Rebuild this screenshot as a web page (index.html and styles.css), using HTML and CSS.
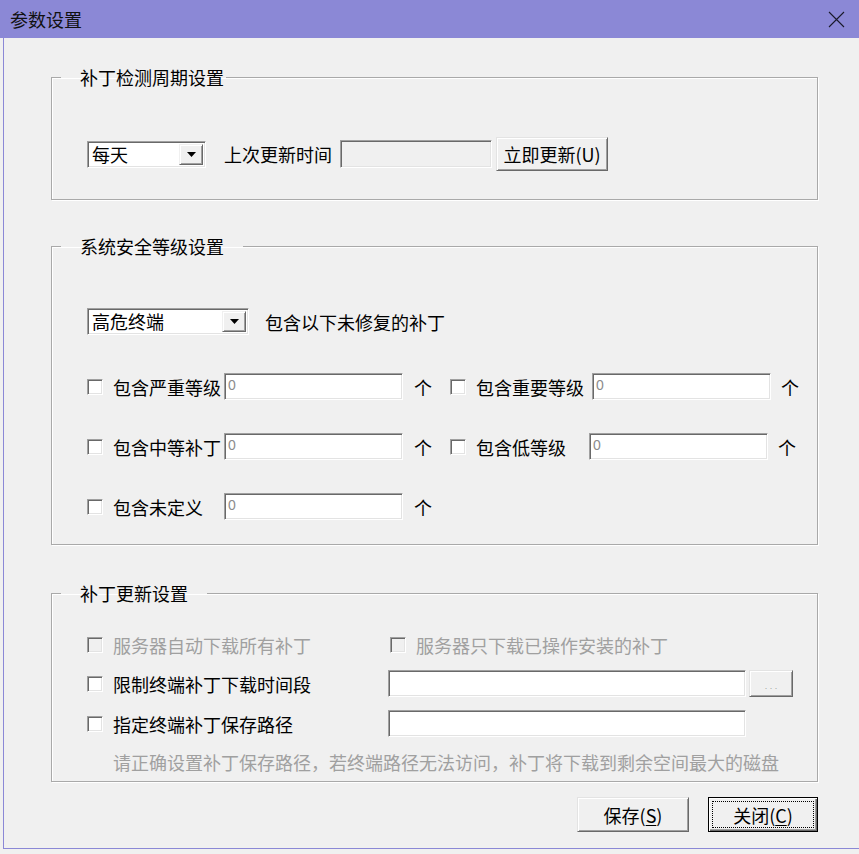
FILE: index.html
```html
<!DOCTYPE html>
<html lang="zh-CN">
<head>
<meta charset="utf-8">
<title>参数设置</title>
<link rel="stylesheet" href="styles.css">
</head>
<body>
<div class="window">
  <div class="titlebar">
    <span class="title">参数设置</span>
    <svg class="close" width="17" height="17" viewBox="0 0 17 17"><path d="M1 1 L16 16 M16 1 L1 16" stroke="#1a1a2a" stroke-width="1.1" fill="none"/></svg>
  </div>
  <div class="client">
    <fieldset class="group g1">
      <legend>补丁检测周期设置</legend>
      <div class="inner inner-1">
        <div class="row row-update">
          <div class="combo combo-day"><span class="combo-text">每天</span><span class="combo-btn"><svg width="9" height="5" viewBox="0 0 9 5"><path d="M0 0 H9 L4.5 5 Z" fill="#000"/></svg></span></div>
          <span class="lbl lbl-last">上次更新时间</span>
          <div class="edit edit-disabled edit-time"></div>
          <button class="btn btn-update">立即更新(U)</button>
        </div>
      </div>
    </fieldset>

    <fieldset class="group g2">
      <legend>系统安全等级设置</legend>
      <div class="inner inner-2">
        <div class="row row-combo">
          <div class="combo combo-level"><span class="combo-text">高危终端</span><span class="combo-btn"><svg width="9" height="5" viewBox="0 0 9 5"><path d="M0 0 H9 L4.5 5 Z" fill="#000"/></svg></span></div>
          <span class="lbl lbl-include">包含以下未修复的补丁</span>
        </div>
        <div class="row row-num">
          <label class="opt opt-l"><span class="chk"></span><span class="lbl">包含严重等级</span></label>
          <div class="edit num"><span class="val">0</span></div>
          <span class="unit">个</span>
          <label class="opt opt-r1"><span class="chk"></span><span class="lbl">包含重要等级</span></label>
          <div class="edit num"><span class="val">0</span></div>
          <span class="unit unit-r">个</span>
        </div>
        <div class="row row-num">
          <label class="opt opt-l"><span class="chk"></span><span class="lbl">包含中等补丁</span></label>
          <div class="edit num"><span class="val">0</span></div>
          <span class="unit">个</span>
          <label class="opt opt-r2"><span class="chk"></span><span class="lbl">包含低等级</span></label>
          <div class="edit num"><span class="val">0</span></div>
          <span class="unit unit-r2">个</span>
        </div>
        <div class="row row-num">
          <label class="opt opt-l"><span class="chk"></span><span class="lbl">包含未定义</span></label>
          <div class="edit num"><span class="val">0</span></div>
          <span class="unit">个</span>
        </div>
      </div>
    </fieldset>

    <fieldset class="group g3">
      <legend>补丁更新设置</legend>
      <div class="inner inner-3">
        <div class="row row-a">
          <label class="opt opt-srv disabled"><span class="chk chk-disabled"></span><span class="lbl">服务器自动下载所有补丁</span></label>
          <label class="opt disabled"><span class="chk chk-disabled"></span><span class="lbl">服务器只下载已操作安装的补丁</span></label>
        </div>
        <div class="row row-b">
          <label class="opt opt-path"><span class="chk"></span><span class="lbl">限制终端补丁下载时间段</span></label>
          <div class="edit edit-path"></div>
          <button class="btn btn-dots">. . .</button>
        </div>
        <div class="row row-b">
          <label class="opt opt-path"><span class="chk"></span><span class="lbl">指定终端补丁保存路径</span></label>
          <div class="edit edit-path"></div>
        </div>
        <p class="hint">请正确设置补丁保存路径，若终端路径无法访问，补丁将下载到剩余空间最大的磁盘</p>
      </div>
    </fieldset>

    <div class="actions">
      <button class="btn btn-action">保存(<u>S</u>)</button>
      <button class="btn btn-action btn-default"><span class="focus">关闭(<u>C</u>)</span></button>
    </div>
  </div>
</div>
</body>
</html>
```

FILE: styles.css
```css
html, body {
  margin: 0;
  padding: 0;
  background: #f0f0f0;
}
body {
  font-family: "Noto Sans CJK SC", "Noto Sans", sans-serif;
  font-size: 18px;
  color: #000;
  width: 859px;
  height: 854px;
  overflow: hidden;
}
.window {
  width: 859px;
}
.titlebar {
  height: 38px;
  background: #8b88d6;
  display: flex;
  align-items: center;
  justify-content: space-between;
  padding: 0 14px 0 10px;
  box-sizing: border-box;
}
.title {
  font-size: 18px;
  line-height: 20px;
  color: #111;
}
.close {
  display: block;
  margin-top: 1px;
}
.client {
  margin-left: 3px;
  height: 811px;
  border-left: 1px solid #8b88d6;
  border-bottom: 1px solid #8b88d6;
  box-sizing: border-box;
  padding: 29px 0 0 47px;
  background: #f0f0f0;
}
.group {
  margin: 0;
  padding: 0;
  width: 767px;
  box-sizing: border-box;
  border: 1px solid #a9a9a9;
  box-shadow: inset 1px 1px 0 #fff, 1px 1px 0 #fff;
  min-width: 0;
}
.group legend {
  margin-left: 9px;
  padding: 0 19px 0 19px;
  line-height: 20px;
  font-size: 18px;
}
.g1 legend {
  padding-right: 2px;
}
.g2 {
  margin-top: 36px;
}
.g3 {
  margin-top: 38px;
}
.inner {
  padding-left: 35px;
}
.inner-1 {
  padding-top: 50px;
  padding-bottom: 28px;
}
.inner-2 {
  padding-top: 52px;
  padding-bottom: 24px;
}
.inner-3 {
  padding-top: 30px;
  padding-bottom: 7px;
}
.row {
  display: flex;
  align-items: center;
}
.row-update {
  height: 34px;
}
.row-combo {
  height: 27px;
}
.row-num {
  height: 27px;
  margin-top: 33px;
}
.row-combo + .row-num {
  margin-top: 38px;
}
.row-a {
  height: 24px;
}
.row-b {
  height: 27px;
  margin-top: 13px;
}
.lbl {
  white-space: nowrap;
  line-height: 20px;
}
.disabled .lbl {
  color: #a0a0a0;
}

/* sunken edit */
.edit {
  height: 27px;
  box-sizing: border-box;
  background: #fff;
  border-top: 1px solid #a0a0a0;
  border-left: 1px solid #a0a0a0;
  border-right: 1px solid #fff;
  border-bottom: 1px solid #fff;
  box-shadow: inset 1px 1px 0 #696969, inset -1px -1px 0 #e3e3e3;
  display: flex;
  align-items: center;
  flex: none;
}
.edit-disabled {
  background: #f0f0f0;
}
.edit-time {
  width: 152px;
  height: 28px;
  margin-left: 8px;
}
.val {
  font-family: "Liberation Sans", sans-serif;
  font-size: 14px;
  color: #8c8c8c;
  padding-left: 3px;
  margin-top: -3px;
}
.num {
  width: 179px;
}

/* combo */
.combo {
  height: 27px;
  box-sizing: border-box;
  background: #fff;
  border-top: 1px solid #a0a0a0;
  border-left: 1px solid #a0a0a0;
  border-right: 1px solid #fff;
  border-bottom: 1px solid #fff;
  box-shadow: inset 1px 1px 0 #696969, inset -1px -1px 0 #e3e3e3;
  display: flex;
  align-items: stretch;
  justify-content: space-between;
  padding: 2px;
  flex: none;
}
.combo-day {
  width: 119px;
}
.combo-level {
  width: 162px;
}
.combo-text {
  line-height: 21px;
  padding-left: 2px;
  white-space: nowrap;
}
.combo-btn {
  width: 24px;
  box-sizing: border-box;
  background: #f0f0f0;
  border-top: 1px solid #f0f0f0;
  border-left: 1px solid #f0f0f0;
  border-right: 1px solid #696969;
  border-bottom: 1px solid #696969;
  box-shadow: inset 1px 1px 0 #fff, inset -1px -1px 0 #a0a0a0;
  display: flex;
  align-items: center;
  justify-content: center;
}
.combo-btn svg {
  display: block;
}
.lbl-last {
  margin-left: 18px;
}
.lbl-include {
  margin-left: 16px;
}

/* checkbox options */
.opt {
  display: flex;
  align-items: center;
  flex: none;
}
.chk {
  width: 16px;
  height: 16px;
  box-sizing: border-box;
  background: #fff;
  border-top: 1px solid #a0a0a0;
  border-left: 1px solid #a0a0a0;
  border-right: 1px solid #fff;
  border-bottom: 1px solid #fff;
  box-shadow: inset 1px 1px 0 #696969, inset -1px -1px 0 #e3e3e3;
  margin-right: 10px;
  flex: none;
}
.chk-disabled {
  background: #f0f0f0;
}
.opt-l {
  width: 137px;
}
.opt-r1 {
  width: 142px;
}
.opt-r2 {
  width: 139px;
}
.unit {
  margin-left: 11px;
  width: 36px;
  line-height: 20px;
  flex: none;
}
.unit-r, .unit-r2 {
  margin-left: 10px;
}
.opt-srv {
  width: 303px;
}
.opt-path {
  width: 301px;
}
.edit-path {
  width: 358px;
}
.hint {
  margin: 13px 0 0 26px;
  line-height: 24px;
  color: #a0a0a0;
  white-space: nowrap;
}

/* raised buttons */
.btn {
  font-family: "Noto Sans CJK SC", "Noto Sans", sans-serif;
  font-size: 18px;
  color: #000;
  background: #f0f0f0;
  box-sizing: border-box;
  border-top: 1px solid #e3e3e3;
  border-left: 1px solid #e3e3e3;
  border-right: 1px solid #696969;
  border-bottom: 1px solid #696969;
  box-shadow: inset 1px 1px 0 #fff, inset -1px -1px 0 #a0a0a0;
  padding: 0;
  margin: 0;
  line-height: 20px;
  display: flex;
  align-items: center;
  justify-content: center;
  flex: none;
}
.btn-update {
  width: 112px;
  height: 34px;
  margin-left: 4px;
}
.btn-dots {
  width: 44px;
  height: 27px;
  margin-left: 3px;
  font-family: "Liberation Sans", sans-serif;
  font-size: 9px;
  color: #a0a0a0;
  padding-top: 4px;
}
.actions {
  width: 767px;
  margin-top: 15px;
  display: flex;
  justify-content: flex-end;
  gap: 19px;
}
.btn-action {
  width: 112px;
  height: 35px;
}
.btn-default {
  width: 110px;
  border: 1px solid #000;
  box-shadow: inset 1px 1px 0 #fff, inset -1px -1px 0 #696969, inset -2px -2px 0 #a0a0a0;
  padding: 3px;
}
.focus {
  flex: 1;
  align-self: stretch;
  display: flex;
  align-items: center;
  justify-content: center;
  border: 1px dotted #000;
}
u {
  text-decoration: underline;
  text-underline-offset: 2px;
}
```
